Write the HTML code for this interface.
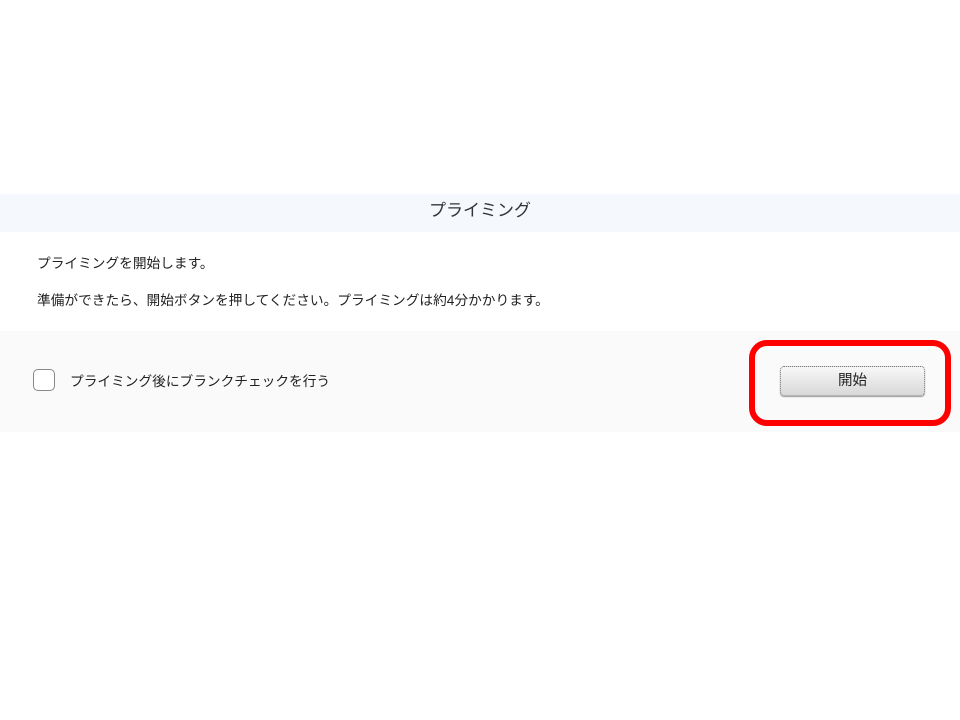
<!DOCTYPE html>
<html><head><meta charset="utf-8"><style>
body{margin:0;width:960px;height:720px;background:#fff;position:relative;font-family:"Liberation Sans","Noto Sans CJK JP",sans-serif;color:#222;overflow:hidden}
.hdr{position:absolute;left:0;top:194px;width:960px;height:38px;background:#f5f8fd;text-align:center;line-height:33px;font-size:17px;color:#333}
.t{position:absolute;left:37px;font-size:13.7px;color:#222}
.ftr{position:absolute;left:0;top:331px;width:960px;height:101px;background:#fafafa}
.cb{position:absolute;left:33px;top:369px;width:20px;height:20px;border:1px solid #888;border-radius:5px;background:#fff}
.red{position:absolute;left:749px;top:340px;width:190px;height:74px;border:6px solid #f00;border-radius:18px}
.btn{position:absolute;left:780px;top:366px;width:143px;height:28px;border:1px dotted #777;border-radius:4px;background:linear-gradient(#f8f8f8,#d8d8d8);box-shadow:0 1px 1px #999;text-align:center;line-height:28px;font-size:14.5px;color:#222}
</style></head><body>
<div class="hdr">プライミング</div>
<div class="t" style="top:252px">プライミングを開始します。</div>
<div class="t" style="top:289px">準備ができたら、開始ボタンを押してください。プライミングは約4分かかります。</div>
<div class="ftr"></div>
<div class="cb"></div>
<div class="t" style="left:70px;top:370px">プライミング後にブランクチェックを行う</div>
<div class="red"></div>
<div class="btn">開始</div>
</body></html>
